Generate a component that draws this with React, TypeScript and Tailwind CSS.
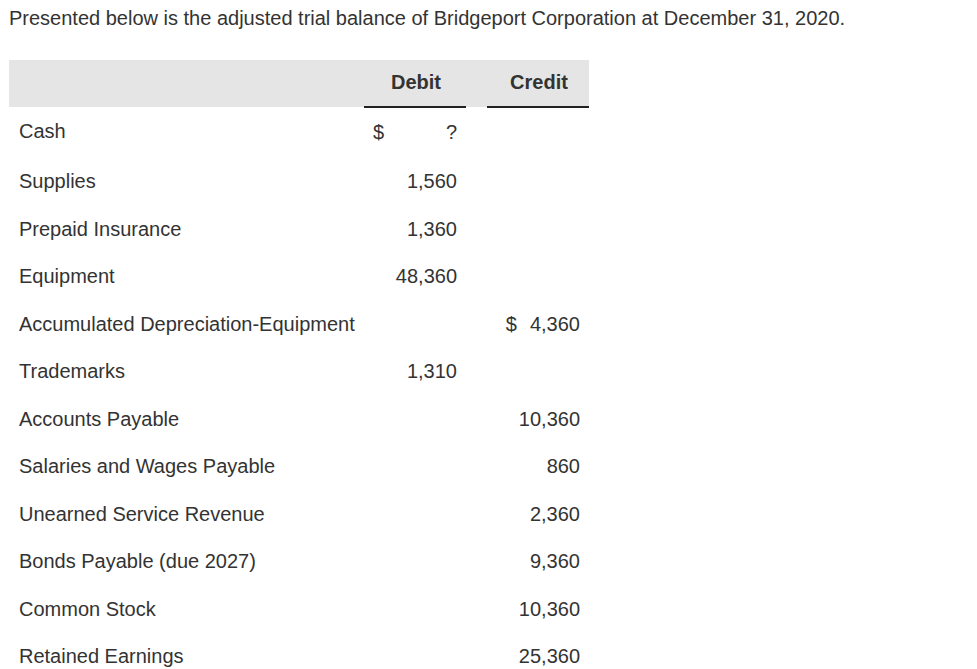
const rows: { label: string; debit?: string; credit?: string; debitSign?: boolean; creditSign?: boolean }[] = [
  { label: "Cash", debit: "?", debitSign: true },
  { label: "Supplies", debit: "1,560" },
  { label: "Prepaid Insurance", debit: "1,360" },
  { label: "Equipment", debit: "48,360" },
  { label: "Accumulated Depreciation-Equipment", credit: "4,360", creditSign: true },
  { label: "Trademarks", debit: "1,310" },
  { label: "Accounts Payable", credit: "10,360" },
  { label: "Salaries and Wages Payable", credit: "860" },
  { label: "Unearned Service Revenue", credit: "2,360" },
  { label: "Bonds Payable (due 2027)", credit: "9,360" },
  { label: "Common Stock", credit: "10,360" },
  { label: "Retained Earnings", credit: "25,360" },
];

export default function App() {
  return (
    <div className="min-h-screen bg-white pl-[9px] pt-[4px] text-[20px] text-[#333] font-['Liberation_Sans',Arial,sans-serif]">
      <p className="leading-[28px]">
        Presented below is the adjusted trial balance of Bridgeport Corporation at December 31, 2020.
      </p>

      <table className="mt-[28px] w-[580px] border-collapse table-fixed">
        <colgroup>
          <col className="w-[355px]" />
          <col className="w-[102px]" />
          <col className="w-[21px]" />
          <col className="w-[102px]" />
        </colgroup>
        <thead>
          <tr className="bg-[#e5e5e5] h-[47px]">
            <th />
            <th className="border-b-2 border-[#222] font-bold text-center align-middle pb-[2px] pl-[2px]">Debit</th>
            <th />
            <th className="border-b-2 border-[#222] font-bold text-center align-middle pb-[2px] pl-[2px]">Credit</th>
          </tr>
        </thead>
        <tbody>
          {rows.map((r, i) => (
            <tr key={r.label} className={i === 0 ? "h-[50.5px]" : "h-[47.5px]"}>
              <td className={`pl-[10px] align-middle ${i === 0 ? "pb-[2px]" : ""}`}>{r.label}</td>
              <td className={`px-[9px] align-middle ${i === 0 ? "pb-[2px]" : ""}`}>
                <div className="flex justify-between">
                  <span>{r.debitSign ? "$" : ""}</span>
                  <span>{r.debit ?? ""}</span>
                </div>
              </td>
              <td />
              <td className="px-[9px] align-middle text-right">
                {r.creditSign && <span className="mr-[13px]">$</span>}
                {r.credit ?? ""}
              </td>
            </tr>
          ))}
        </tbody>
      </table>
    </div>
  );
}
